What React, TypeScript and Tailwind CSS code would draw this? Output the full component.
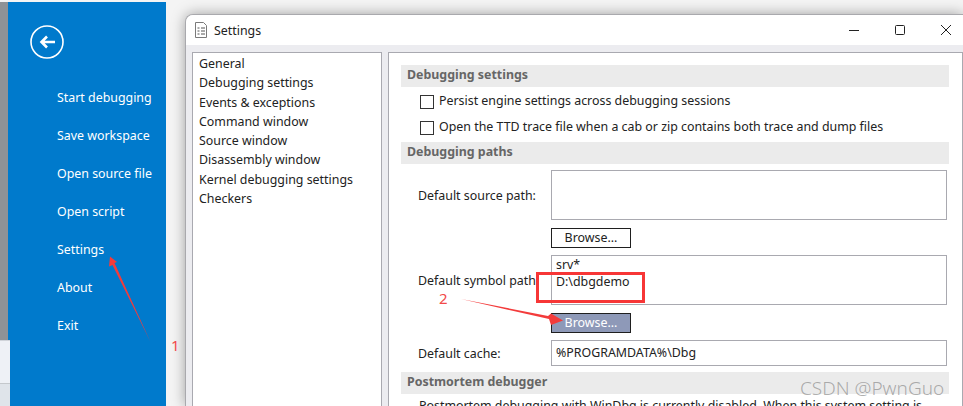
const menuItems = ['Start debugging', 'Save workspace', 'Open source file', 'Open script', 'Settings', 'About', 'Exit'];
const pages = [
  'General',
  'Debugging settings',
  'Events & exceptions',
  'Command window',
  'Source window',
  'Disassembly window',
  'Kernel debugging settings',
  'Checkers',
];

function SectionTitle({ children }: { children: string }) {
  return <div className="h-[22px] shrink-0 bg-[#ebebeb] pl-[6px] text-[12.4px] leading-[19px] font-bold text-[#666666]">{children}</div>;
}

function Check({ label }: { label: string }) {
  return (
    <div className="flex h-[13px] items-center gap-[5px] pl-[19px] text-[12.4px] text-[#222222]">
      <span className="h-[14px] w-[14px] shrink-0 border border-[#333333] bg-white" />
      <span>{label}</span>
    </div>
  );
}

function Browse({ active }: { active?: boolean }) {
  return (
    <div className="pl-[150px]">
      <div
        className={
          active
            ? 'flex h-[20px] w-[80px] items-center justify-center border border-[#1f1f1f] bg-[#8e99b8] text-[12.4px] text-white'
            : 'flex h-[20px] w-[80px] items-center justify-center border border-[#1f1f1f] bg-white text-[12.4px] text-[#222222]'
        }
      >
        Browse...
      </div>
    </div>
  );
}

export default function App() {
  return (
    <div className="relative flex h-[406px] w-[963px] overflow-hidden bg-[#f4f4f4] pt-[2px] font-['Noto_Sans',sans-serif]">
      {/* strip of the window behind */}
      <div className="flex w-[10px] shrink-0 flex-col">
        <div className="flex-1 border-r-2 border-[#007acc] bg-[#8f9296]" />
        <div className="h-[43px] border-t border-[#d0d4da] bg-[#eef1f6]" />
        <div className="h-[23px] border-t border-[#c4c8cc] bg-[#dfe4ea]" />
      </div>

      {/* backstage menu */}
      <div className="w-[156px] shrink-0 bg-[#007acc] text-white">
        <div className="pt-[23px] pl-[20px]">
          <svg width="34" height="34" viewBox="0 0 34 34" fill="none" stroke="white">
            <circle cx="17" cy="17" r="16" strokeWidth="1.6" />
            <path d="M25 17H12M17 11.500l-5.500 5.500 5.500 5.500" strokeWidth="2.6" />
          </svg>
        </div>
        <div className="mt-[29px] flex flex-col gap-[19px] pl-[47px]">
          {menuItems.map((item) => (
            <div key={item} className="h-[19px] text-[12.4px] leading-[19px]">{item}</div>
          ))}
        </div>
      </div>

      {/* settings dialog */}
      <div className="min-w-0 flex-1 pt-[12px] pl-[19px]">
        <div className="h-full overflow-hidden rounded-tl-[8px] border-t border-l border-[#a9a9ad] bg-[#ececf0] shadow-[0_0_14px_rgba(0,0,0,0.35)]">
          <div className="flex h-[30px] items-center bg-white pb-[1px] pl-[9px]">
            <svg width="12" height="16" viewBox="0 0 12 16" fill="none" stroke="#7a7a7a">
              <path d="M.5.5h8l3 3v12H.5z" />
              <path d="M2.5 6h2M6 6h4M2.5 9h2M6 9h4M2.5 12h2M6 12h4" stroke="#555555" />
            </svg>
            <span className="mt-[3px] ml-[7px] text-[12.4px] text-[#222222]">Settings</span>
            <div className="ml-auto flex items-center gap-[36px] pr-[12px]">
              <svg width="10" height="10" viewBox="0 0 10 10" stroke="#222222" fill="none"><path d="M0 5.500h10" /></svg>
              <svg width="10" height="10" viewBox="0 0 10 10" stroke="#222222" fill="none"><rect x=".5" y=".5" width="9" height="9" rx="1" /></svg>
              <svg width="10" height="10" viewBox="0 0 10 10" stroke="#222222" fill="none"><path d="M0 0l10 10M10 0L0 10" /></svg>
            </div>
          </div>
          <div className="flex gap-[6px] pt-[7px] pl-[6px]">
            <div className="h-[360px] w-[190px] shrink-0 border border-[#a9a9b0] bg-white pt-[1px] pl-[6px] text-[12.4px] leading-[19.3px] text-[#222222]">
              {pages.map((page) => (
                <div key={page}>{page}</div>
              ))}
            </div>
            <div className="h-[360px] min-w-0 flex-1 border border-[#a9a9b0] bg-white pt-[12px] pr-[13px] pl-[12px]">
              <SectionTitle>Debugging settings</SectionTitle>
              <div className="mt-[8px] flex flex-col gap-[13px]">
                <Check label="Persist engine settings across debugging sessions" />
                <Check label="Open the TTD trace file when a cab or zip contains both trace and dump files" />
              </div>
              <div className="mt-[8px]"><SectionTitle>Debugging paths</SectionTitle></div>
              <div className="mt-[6px] flex h-[50px] items-center pl-[17px] text-[12.4px] text-[#222222]">
                <span className="mt-[2px] w-[133px] shrink-0">Default source path:</span>
                <div className="mr-[2px] h-full flex-1 border border-[#a9a9b0]" />
              </div>
              <div className="mt-[8px]"><Browse /></div>
              <div className="mt-[7px] flex h-[50px] items-center pl-[17px] text-[12.4px] text-[#222222]">
                <span className="mt-[2px] w-[133px] shrink-0">Default symbol path:</span>
                <div className="mr-[2px] h-full flex-1 border border-[#a9a9b0] pl-[4px] leading-[17px]">
                  <div>srv*</div>
                  <div>D:\dbgdemo</div>
                </div>
              </div>
              <div className="mt-[8px]"><Browse active /></div>
              <div className="mt-[7px] flex h-[26px] items-center pl-[17px] text-[12.4px] text-[#222222]">
                <span className="mt-[2px] w-[133px] shrink-0">Default cache:</span>
                <div className="mr-[2px] flex h-full flex-1 items-center border border-[#a9a9b0] pt-[1px] pl-[4px]">%PROGRAMDATA%\Dbg</div>
              </div>
              <div className="mt-[6px]"><SectionTitle>Postmortem debugger</SectionTitle></div>
              <div className="mt-[3px] pl-[18px] text-[12.4px] whitespace-nowrap text-[#222222]">
                Postmortem debugging with WinDbg is currently disabled. When this system setting is
              </div>
            </div>
          </div>
        </div>
      </div>

      {/* red annotations pasted over the screenshot */}
      <svg className="pointer-events-none absolute inset-0" width="963" height="406" fill="none">
        <path d="M110 256.500L117 262l-2.500 1L150.500 342 112.500 265 109 266.500z" fill="#f33b3b" />
        <rect x="537.500" y="273.500" width="106" height="28" stroke="#f73636" strokeWidth="3" />
        <path d="M461 299l87 17 3-2.500 12 7-12 4.500-2-6z" fill="#f33b3b" />
      </svg>
      <span className="absolute top-[334px] left-[171px] text-[15px] text-[#f24a4a]">1</span>
      <span className="absolute top-[287px] left-[439px] text-[15px] text-[#f24a4a]">2</span>
      <span className="absolute top-[374px] left-[800px] text-[19px] font-light text-[#8c8c8c]/70">CSDN @PwnGuo</span>
    </div>
  );
}
